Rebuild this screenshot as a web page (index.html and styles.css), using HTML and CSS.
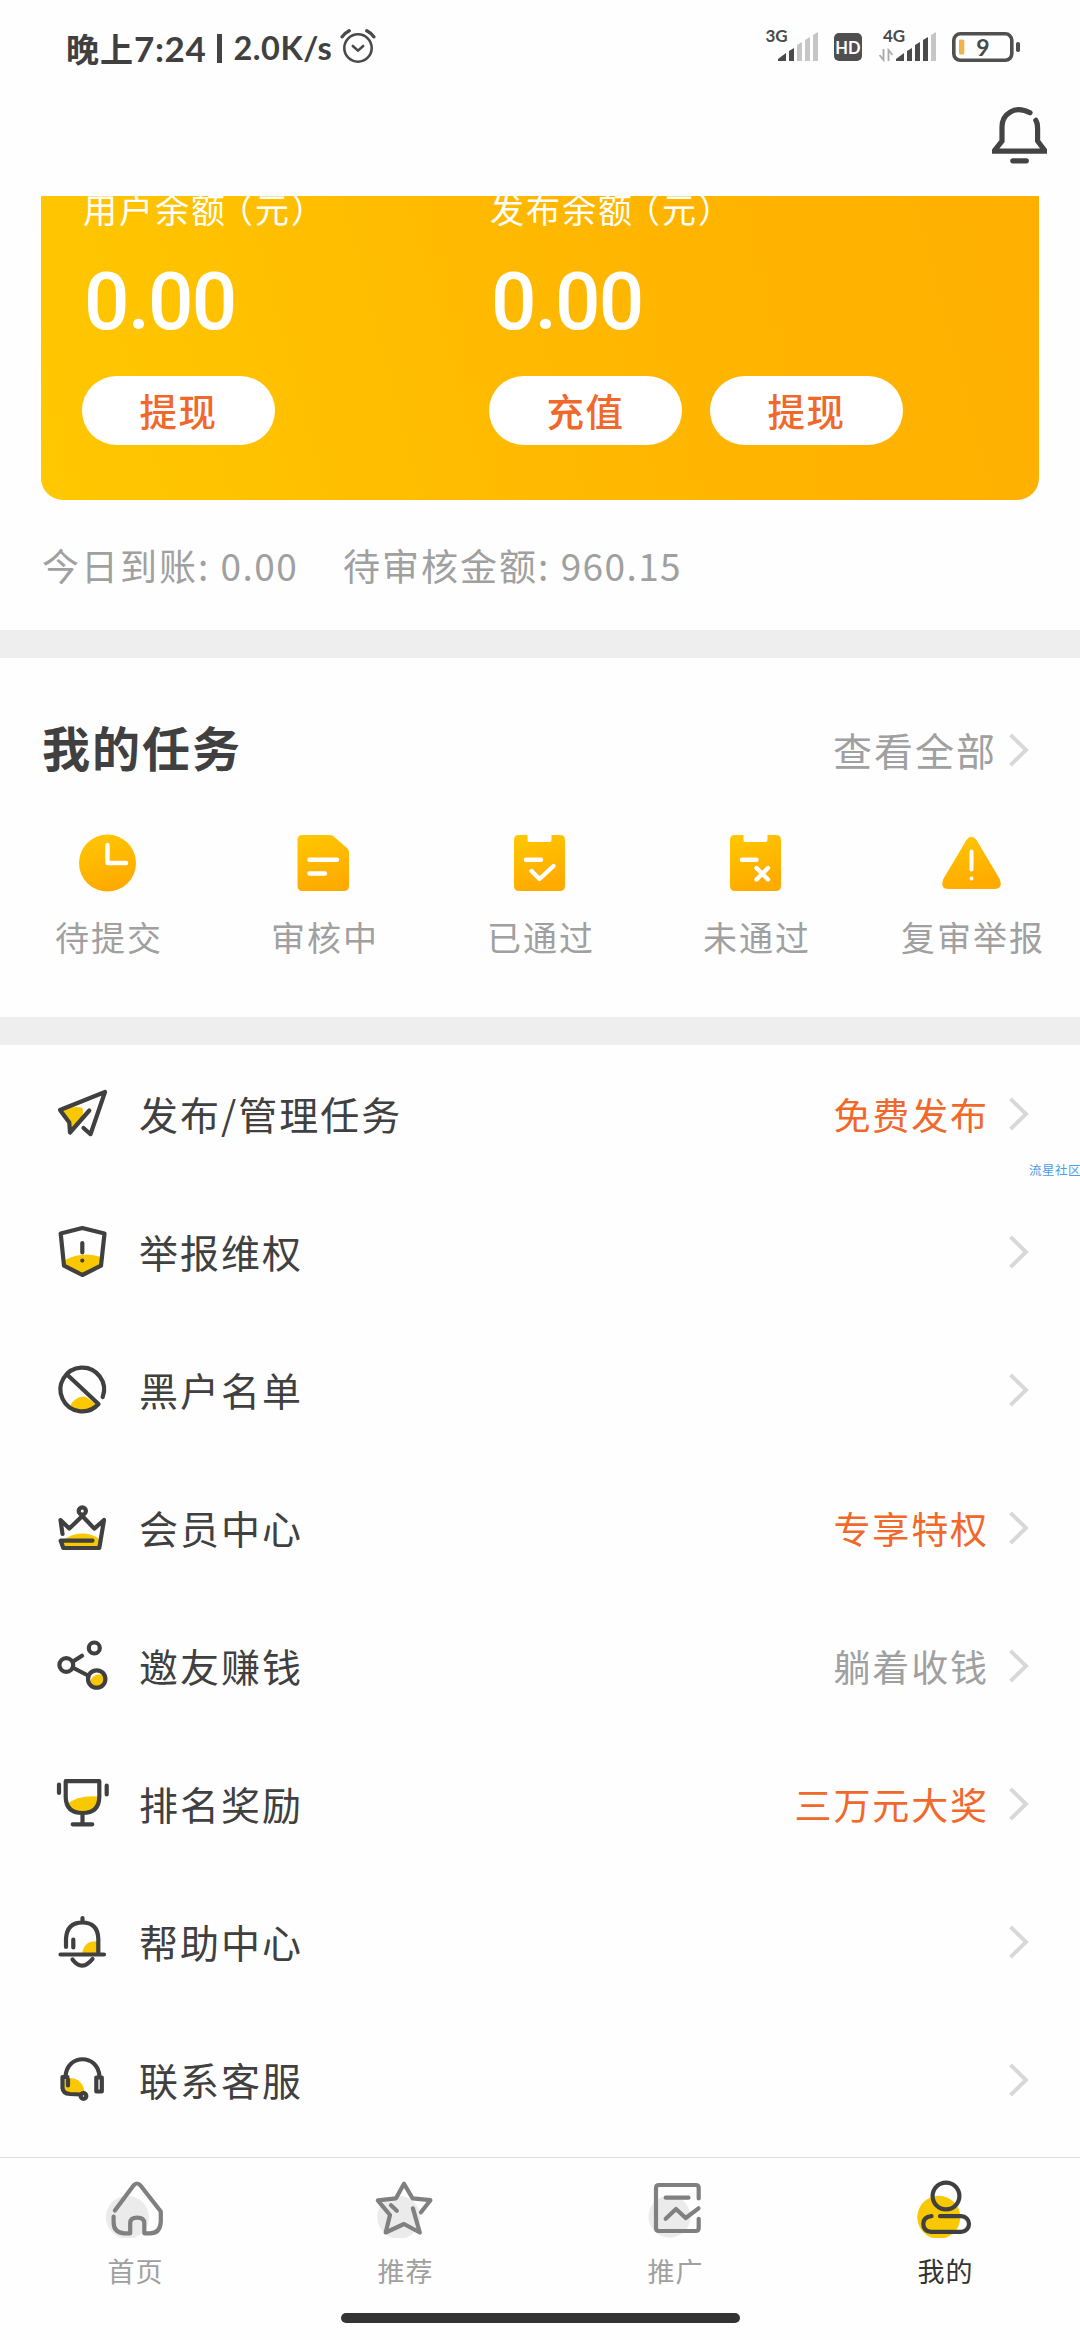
FILE: index.html
```html
<!DOCTYPE html>
<html lang="zh-CN">
<head>
<meta charset="utf-8">
<title>我的</title>
<link rel="stylesheet" href="styles.css">
</head>
<body>
<svg class="defs" width="0" height="0">
  <defs>
    <linearGradient id="gold" x1="0" y1="0" x2="0.3" y2="1">
      <stop offset="0" stop-color="#ffc800"/>
      <stop offset="1" stop-color="#ffab00"/>
    </linearGradient>
  </defs>
</svg>
<div class="screen">
  <header class="status">
    <span class="clock"><span class="cjk">晚上</span>7:24</span>
    <i class="sep"></i>
    <span class="speed">2.0K/s</span>
    <svg class="alarm" viewBox="0 0 36 36" fill="none" stroke="#4a4a4a" stroke-linecap="round">
      <circle cx="18" cy="19" r="13.7" stroke-width="2.6"/>
      <path d="M12.8 17l5.2 4.6 5.2-4.6" stroke-width="2.6"/>
      <path d="M2.2 7.8q3-4 7-6M33.8 7.8q-3-4-7-6" stroke-width="3.4"/>
    </svg>
    <svg class="signals" viewBox="764 26 260 42">
      <text x="765.5" y="42" class="net">3G</text>
      <g fill="#4a4a4a"><path d="M778 61v-2l8-6v8z"/><path d="M789 61V51l5-3v13z"/></g>
      <g fill="#c6c6c6"><path d="M797 61V45l5-3v19z"/><path d="M805 61V40l5-3v24z"/><path d="M813 61V35l5-3v29z"/></g>
      <rect x="834" y="33" width="28" height="28" rx="5" fill="#4f4f4f"/>
      <text x="848" y="53.500" class="hd">HD</text>
      <text x="883" y="42" class="net">4G</text>
      <path d="M883.5 49v11l-4-5M888.500 61V50l4 5" fill="none" stroke="#aaa" stroke-width="1.800"/>
      <g fill="#4a4a4a"><path d="M896 61v-2l8-6v8z"/><path d="M907 61V51l5-3v13z"/><path d="M915 61V45l5-3v19z"/><path d="M923 61V40l5-3v24z"/></g>
      <path d="M931 61V35l5-3v29z" fill="#c6c6c6"/>
      <rect x="953.800" y="33.800" width="58" height="26.500" rx="6.500" fill="none" stroke="#505050" stroke-width="3.600"/>
      <rect x="959" y="39.500" width="5.300" height="15" rx="1.500" fill="#f2b24c"/>
      <rect x="1016" y="42" width="4" height="10" rx="1.800" fill="#505050"/>
      <text x="983" y="55.700" class="level">9</text>
    </svg>
  </header>
  <div class="topbar">
    <svg class="bell" viewBox="992 104 55 62" fill="none" stroke="#444" stroke-width="5.200" stroke-linecap="round">
      <path d="M1030 112.800C1015 104.500 1002 114 1002 127V141L994 151.200H1045.300L1037.600 141V128Q1037.600 123 1035.800 120.300"/>
      <path d="M1012.800 160.800h13.500"/>
    </svg>
  </div>

  <section class="wallet">
    <div class="card">
      <div class="balance">
        <p class="caption">用户余额<span class="paren">（</span>元）</p>
        <p class="amount">0.00</p>
        <div class="actions"><span class="pill">提现</span></div>
      </div>
      <div class="balance">
        <p class="caption">发布余额<span class="paren">（</span>元）</p>
        <p class="amount">0.00</p>
        <div class="actions"><span class="pill">充值</span><span class="pill">提现</span></div>
      </div>
    </div>
    <div class="totals"><span>今日到账: <span class="num">0.00</span></span><span>待审核金额: <span class="num">960.15</span></span></div>
  </section>

  <section class="tasks">
    <div class="tasks-head">
      <h2>我的任务</h2>
      <span class="all">查看全部</span>
      <svg class="chev" viewBox="0 0 20 34"><path d="M1.500 1.800L17 17 1.500 32.200"/></svg>
    </div>
    <div class="task-grid">
      <div class="task">
        <svg viewBox="0 0 60 60"><circle cx="29.500" cy="30" r="28.500" fill="url(#gold)"/><path class="w" d="M29.500 12v18h18.500"/></svg>
        <span>待提交</span>
      </div>
      <div class="task">
        <svg viewBox="0 0 60 60"><path fill="url(#gold)" d="M8.500 2h27.500q2 0 3.500 1.300L53 15q2 1.800 2 4v34q0 5-5 5H8.500q-5 0-5-5V7q0-5 5-5z"/><path class="w" d="M15.500 26.800h27.500M15.500 40.500h15.500"/></svg>
        <span>审核中</span>
      </div>
      <div class="task">
        <svg viewBox="0 0 60 60"><path fill="url(#gold)" d="M9 2h8.500v5q0 2 2 2h20q2 0 2-2V2H50q5 0 5 5v46q0 5-5 5H9q-5 0-5-5V7q0-5 5-5z"/><path class="w" d="M16 26.800h15M21.500 38l8 8L43.500 33"/></svg>
        <span>已通过</span>
      </div>
      <div class="task">
        <svg viewBox="0 0 60 60"><path fill="url(#gold)" d="M9 2h8.500v5q0 2 2 2h20q2 0 2-2V2H50q5 0 5 5v46q0 5-5 5H9q-5 0-5-5V7q0-5 5-5z"/><path class="w" d="M16 26.800h14.500M30.500 35l11.500 11.500M42 35L30.500 46.500"/></svg>
        <span>未通过</span>
      </div>
      <div class="task">
        <svg viewBox="0 0 60 60"><path fill="url(#gold)" d="M24.500 7q5-6.500 10 0L57.700 46q3.500 10-4.700 10H6q-8.200 0-4.700-10z"/><path class="w thin" d="M29.500 18.500v18M29.500 45.500v.1"/></svg>
        <span>复审举报</span>
      </div>
    </div>
  </section>

  <nav class="menu">
    <div class="row">
      <svg class="ico" viewBox="0 0 60 60"><path class="y" d="M8 26q16-5 22.500-2 2 7-3 12.500l-8 9-3-7z"/><path d="M37.300 26.500L18 48.500 17.300 38.500 8 26 53 8 38.500 50.200 31.500 44"/></svg>
      <span class="label">发布/管理任务</span><span class="value hot">免费发布</span>
      <svg class="chev" viewBox="0 0 20 34"><path d="M1.500 1.800L17 17 1.500 32.200"/></svg>
    </div>
    <div class="row">
      <svg class="ico" viewBox="0 0 60 60"><path class="y" d="M12 38.500Q30 28.500 49 35V44L30.300 53 12 44z"/><path d="M30.300 6L8.700 11.500 12 43.700 30.300 53 49 43.700 52.500 11.500z"/><path d="M30.300 21v9.500M30.300 38.500v.1"/></svg>
      <span class="label">举报维权</span>
      <svg class="chev" viewBox="0 0 20 34"><path d="M1.500 1.800L17 17 1.500 32.200"/></svg>
    </div>
    <div class="row">
      <svg class="ico" viewBox="0 0 60 60"><path class="y" d="M18 46Q23 36 33 36.500L45.500 44.500Q40 51 30 51T18 46z"/><path d="M50.700 37A21.800 21.800 0 1 0 46.500 44L15.500 15"/></svg>
      <span class="label">黑户名单</span>
      <svg class="chev" viewBox="0 0 20 34"><path d="M1.500 1.800L17 17 1.500 32.200"/></svg>
    </div>
    <div class="row">
      <svg class="ico" viewBox="0 0 60 60"><path class="y" d="M10 43Q20 35 31 35.500T48 42L47 50H11z"/><circle cx="30.300" cy="13" r="3.600"/><path d="M10.500 36L8.500 22 17.300 30.600 30.300 18 42.300 30.600 52 22 47.300 50H11.300L8.700 42.700H40.500"/></svg>
      <span class="label">会员中心</span><span class="value hot">专享特权</span>
      <svg class="chev" viewBox="0 0 20 34"><path d="M1.500 1.800L17 17 1.500 32.200"/></svg>
    </div>
    <div class="row">
      <svg class="ico" viewBox="0 0 60 60"><path class="y" d="M38 46q2-7 8-7.500t6.500 2Q51 51 44.500 51 39 50.500 38 46z"/><circle cx="42.300" cy="12" r="5.500"/><circle cx="14.300" cy="29" r="6.900"/><circle cx="44.700" cy="43" r="8.700"/><path d="M21 25.500L30 19.800M21.500 32L36 39.500"/></svg>
      <span class="label">邀友赚钱</span><span class="value">躺着收钱</span>
      <svg class="chev" viewBox="0 0 20 34"><path d="M1.500 1.800L17 17 1.500 32.200"/></svg>
    </div>
    <div class="row">
      <svg class="ico" viewBox="0 0 60 60"><path class="y" d="M15 30Q27 20.500 47 22.500 46 38.500 30.500 38.500 18 38 15 30z"/><path d="M13.700 7.200H47.300V23Q47 39 30.500 39T13.700 23zM30.500 39V50M20.700 50.300H40.300M7 10.500v8.500M54.700 11.500v9"/></svg>
      <span class="label">排名奖励</span><span class="value hot">三万元大奖</span>
      <svg class="chev" viewBox="0 0 20 34"><path d="M1.500 1.800L17 17 1.500 32.200"/></svg>
    </div>
    <div class="row">
      <svg class="ico" viewBox="0 0 60 60"><path class="y" d="M30 42Q32 28 46 29.500V42z"/><path d="M14 35V26.500Q15 10.500 30.300 10.500T46.300 26.500V42M30.500 6v4M8.500 42.500H52M21.300 27.500v8M20.500 47.500Q30 60 40.500 47"/></svg>
      <span class="label">帮助中心</span>
      <svg class="chev" viewBox="0 0 20 34"><path d="M1.500 1.800L17 17 1.500 32.200"/></svg>
    </div>
    <div class="row">
      <svg class="ico" viewBox="0 0 60 60"><path class="y" d="M11 28.500Q31 25 33 44L14 43.500 11 40z"/><path d="M13.500 26.500C15 3.500 46 3.500 47.500 26.500M15.500 27H10.500V38Q11 43.500 18 44L28.500 44.500M16 29.500v6M44.300 27.500h5.500v14h-5.500z"/><circle cx="31.500" cy="46" r="2.800"/></svg>
      <span class="label">联系客服</span>
      <svg class="chev" viewBox="0 0 20 34"><path d="M1.500 1.800L17 17 1.500 32.200"/></svg>
    </div>
  </nav>

  <footer class="tabs">
    <div class="tab">
      <svg viewBox="0 0 60 60"><circle class="blob" cx="22.400" cy="39.300" r="21.500"/><path d="M9.900 32.500L28.500 7.500Q32 3.500 35.500 7.500L55.800 33.500V44Q55 55.300 45 55.300H39.300V45Q39 39.700 32.200 39.700T25.200 45V55.300H19Q8.500 54.500 8.600 44V38.500"/></svg>
      <span>首页</span>
    </div>
    <div class="tab">
      <svg viewBox="0 0 60 60"><circle class="blob" cx="23.800" cy="39.300" r="21.500"/><path d="M46 34.300L55.400 22.200 37.500 20.300 29 5.800 21 20.300 2.800 22.300 15 37 10.700 54.500 29 46 44.800 54.500 37.900 30.300M16 27.300l5.800 5.500"/></svg>
      <span>推荐</span>
    </div>
    <div class="tab">
      <svg viewBox="0 0 60 60"><circle class="blob" cx="24.500" cy="38.700" r="21"/><path d="M53.700 20.500V10Q53.700 7 50.700 7H14Q11 7 11 10V50Q11 53 14 53H50.700Q53.700 53 53.700 50V40.800M20.700 19.700H43.500M20.700 40.700L31 31 40.700 40 53.500 30.300"/></svg>
      <span>推广</span>
    </div>
    <div class="tab active">
      <svg viewBox="0 0 60 60"><circle class="blob" cx="23.800" cy="39.300" r="21.500"/><circle cx="31" cy="18" r="13.400"/><path d="M25 38.200H46.200a7.800 7.800 0 0 1 0 15.600H16.100Q8.300 53 8.300 46T16.500 38.200"/></svg>
      <span>我的</span>
    </div>
  </footer>
  <div class="gesture"></div>
  <span class="mark">流星社区</span>
</div>
</body>
</html>
```
FILE: styles.css
```css
* { box-sizing: border-box; }
body, p, h2 { margin: 0; }
body {
  background: #fff;
  font-family: "Noto Sans CJK SC", sans-serif;
  color: #404040;
}
.defs { position: absolute; }
.screen {
  position: relative;
  width: 1080px;
  height: 2340px;
  overflow: hidden;
  display: flex;
  flex-direction: column;
  background: #fefefe;
  white-space: nowrap;
}

/* status bar */
.status {
  height: 96px;
  padding: 0 56px 0 66px;
  display: flex;
  align-items: center;
}
.clock, .speed { font-family: Lato, "Noto Sans CJK SC", sans-serif; font-weight: 700; line-height: 94px; }
.clock { width: 141px; font-size: 35px; letter-spacing: 0.600px; }
.clock .cjk { font-size: 33px; letter-spacing: 1px; }
.sep { width: 4.500px; height: 29px; margin: 0 12px 0 10px; background: #444; }
.speed { width: 106px; font-size: 32.500px; letter-spacing: 0.500px; }
.alarm { width: 36px; height: 36px; margin-top: -2px; }
.signals { width: 260px; height: 42px; margin-left: auto; margin-top: -2px; }
.signals text { font-family: Lato, sans-serif; font-weight: 700; fill: #4a4a4a; }
.signals .net { font-size: 17px; }
.signals .hd { font-size: 16.500px; fill: #fff; text-anchor: middle; }
.signals .level { font-size: 23px; text-anchor: middle; }

.topbar {
  height: 100px;
  padding: 8px 33px 0;
  display: flex;
  justify-content: flex-end;
}
.bell { width: 55px; height: 62px; }

/* balances */
.wallet { height: 434px; padding: 0 41px; }
.card {
  height: 304px;
  padding-left: 41px;
  display: flex;
  overflow: hidden;
  border-radius: 0 0 22px 22px;
  background: linear-gradient(75deg, #ffc800, #ffb700 55%, #ffaf00);
  color: #fff;
}
.balance { width: 407px; flex: none; }
.caption {
  height: 50px;
  margin-top: -12px;
  padding-left: 1px;
  font-size: 34px;
  letter-spacing: 2px;
  line-height: 49px;
}
.paren { margin-left: -8px; }
.amount {
  height: 142px;
  padding-left: 2px;
  font: 500 80px/136px Roboto, sans-serif;
  letter-spacing: -1.800px;
}
.actions { display: flex; gap: 28px; }
.pill {
  flex: none;
  width: 193px;
  height: 69px;
  border-radius: 35px;
  background: #fff;
  color: #f0682a;
  font-size: 37.500px;
  font-weight: 500;
  letter-spacing: 1.500px;
  line-height: 68px;
  text-align: center;
}
.totals {
  display: flex;
  gap: 45px;
  height: 130px;
  padding-left: 1px;
  font-size: 37px;
  letter-spacing: 2px;
  line-height: 130px;
  color: #a0a0a0;
}
.num { letter-spacing: 1.400px; }

/* tasks */
.tasks {
  height: 415px;
  border: solid #eee;
  border-width: 28px 0;
}
.tasks-head {
  height: 175px;
  padding: 0 51px 0 42px;
  display: flex;
  align-items: center;
}
h2 { flex: 1; font-size: 48px; font-weight: 700; letter-spacing: 2px; }
.all { margin: 7px 12px 0 0; font-size: 39px; letter-spacing: 2px; color: #a0a0a0; }
.chev { flex: none; width: 20px; height: 34px; fill: none; stroke: #d8d8d8; stroke-width: 3.900px; }
.tasks-head .chev { margin-top: 9px; }
.task-grid { display: grid; grid-template-columns: repeat(5, 216px); }
.task { display: flex; flex-direction: column; align-items: center; }
.task svg { width: 60px; height: 60px; }
.task span {
  margin-top: 17px;
  padding-left: 2px;
  font-size: 34px;
  letter-spacing: 2px;
  line-height: 54px;
  color: #a0a0a0;
}
.w { fill: none; stroke: #fff; stroke-width: 4.400px; stroke-linecap: round; stroke-linejoin: round; }
.thin { stroke-width: 4px; }

/* menu */
.menu { height: 1112px; }
.row {
  height: 138px;
  padding: 0 51px 0 52px;
  display: flex;
  align-items: center;
}
.ico {
  width: 60px;
  height: 60px;
  fill: none;
  stroke: #404040;
  stroke-width: 4.200px;
  stroke-linecap: round;
  stroke-linejoin: round;
}
.ico .y { fill: #fac800; stroke: none; }
.label { flex: 1; margin: -3px 0 0 27px; font-size: 39px; letter-spacing: 2px; }
.value { margin: -1px 20px 0 0; font-size: 37px; letter-spacing: 1.900px; color: #a0a0a0; }
.hot { color: #f0682a; }

/* bottom tabs */
.tabs {
  height: 155px;
  padding-top: 20px;
  border-top: 1px solid #dedede;
  display: grid;
  grid-template-columns: repeat(4, 270px);
}
.tab {
  display: flex;
  flex-direction: column;
  align-items: center;
  font-size: 27px;
  letter-spacing: 1px;
  color: #a0a0a0;
}
.tab span { margin-top: 13px; padding-left: 1px; line-height: 40px; }
.tab svg {
  width: 60px;
  height: 60px;
  fill: none;
  stroke: #808080;
  stroke-width: 4.200px;
  stroke-linecap: round;
  stroke-linejoin: round;
}
.tab .blob { fill: #ebebeb; stroke: none; }
.active { color: #333; }
.active svg { stroke: #404040; }
.active .blob { fill: #fac800; }
.gesture {
  width: 399px;
  height: 10px;
  margin: 1px auto 0;
  border-radius: 5px;
  background: #333;
}

/* floating watermark over the list */
.mark {
  position: absolute;
  left: 1029px;
  top: 1160px;
  font-size: 12.500px;
  letter-spacing: 0.500px;
  line-height: 20px;
  color: #4a9cec;
}
```
